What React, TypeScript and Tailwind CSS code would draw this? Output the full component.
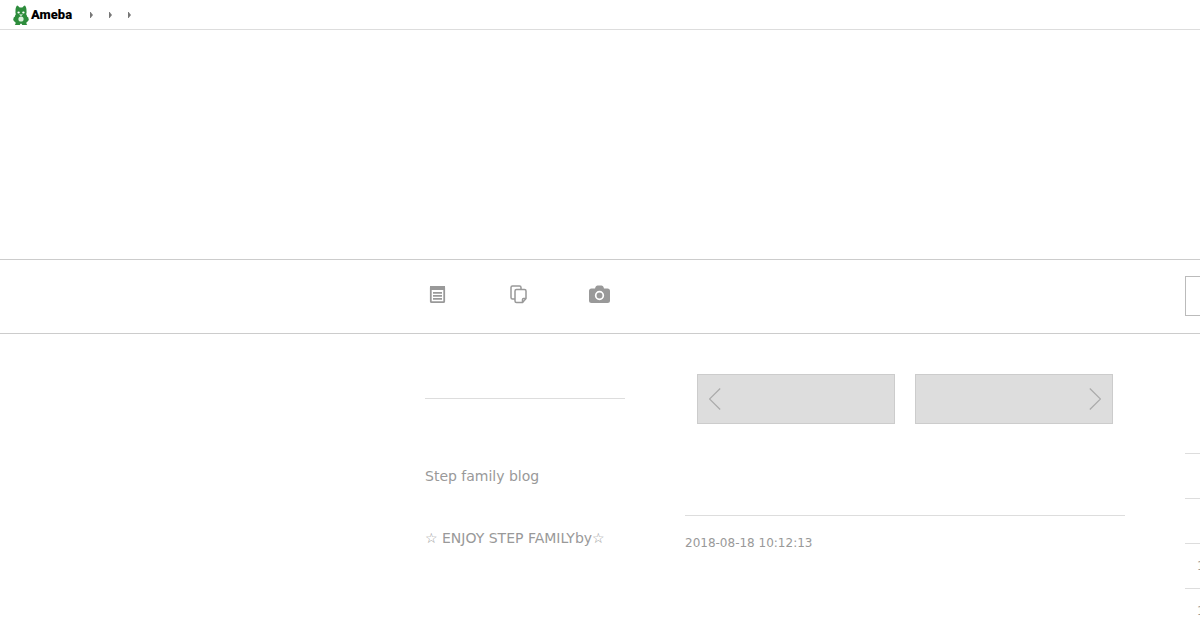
import React from 'react';

const ranking = ['', '', '1', '1', ''];

function Logo() {
  return (
    <a href="#" aria-label="Ameba" className="flex items-center gap-0.5">
      <svg width="16" height="20" viewBox="0 0 16 20" fill="#2d8c3c">
        <path d="M4 .4c1 .2 2 1.100 2.700 2.200h2.600C10 1.500 11 .600 12 .400c1.200 1.600 1.600 3.400 1.500 5.400.2 1.300.1 2.400-.3 3.400.7.900 1 1.900 1.100 2.800l.9.200.6 2.600c-.4 1.200-1.200 2-2.300 2.400.2.700.1 1.200-.2 1.500l1 1.200H9.200L8.600 18.700H7.400L6.800 19.900H1.700l1-1.200c-.3-.3-.4-.8-.2-1.500C1.400 16.800.6 16 .2 14.800l.6-2.600.9-.2c.1-.9.4-1.900 1.100-2.800-.4-1-.5-2.100-.3-3.400C2.400 3.800 2.800 2 4 .4z" />
        <ellipse cx="8" cy="14" rx="2.600" ry="2.600" fill="#d9efda" />
        <ellipse cx="5.600" cy="7.600" rx="1.200" ry="1" fill="#fff" />
        <ellipse cx="10.400" cy="7.600" rx="1.200" ry="1" fill="#fff" />
        <path d="M6 9.500h4L8 11z" fill="#fff" />
      </svg>
      <span className="font-['Roboto',sans-serif] text-[13px] leading-5 font-black text-black">Ameba</span>
    </a>
  );
}

function Crumb() {
  return (
    <svg width="3" height="6" viewBox="0 0 3 6" fill="#777">
      <path d="M0 0h.6L3 3 .6 6H0z" />
    </svg>
  );
}

function ArticleIcon() {
  return (
    <svg width="25" height="24" viewBox="0 0 25 24" fill="none" stroke="#999">
      <rect x="5.800" y="4.800" width="13.400" height="15.400" rx=".8" strokeWidth="1.800" />
      <path d="M5 6h15" strokeWidth="4" />
      <path d="M8 10.800h9M8 13.800h9M8 16.800h9" strokeWidth="1.700" />
    </svg>
  );
}

function ThemeIcon() {
  return (
    <svg width="25" height="24" viewBox="0 0 25 24" fill="none" stroke="#999" strokeWidth="1.500" strokeLinejoin="round">
      <path d="M9 17H6.500A1.500 1.500 0 0 1 5 15.500V5.500A1.500 1.500 0 0 1 6.500 4h7A1.500 1.500 0 0 1 15 5.500V7" />
      <path d="M10.500 7.500h8A1.500 1.500 0 0 1 20 9v7.500L16.500 20.500h-6A1.500 1.500 0 0 1 9 19V9a1.500 1.500 0 0 1 1.500-1.500z" />
      <path d="M20 16.500h-2.500a1 1 0 0 0-1 1v3" />
    </svg>
  );
}

function PhotoIcon() {
  return (
    <svg width="25" height="24" viewBox="0 0 25 24" fill="#999">
      <path d="M8.500 5Q9 3.500 10.500 3.500h4q1.500 0 2 1.500l.5 1.500h3.500q2.500 0 2.500 2.500v9.500q0 2.500-2.500 2.500h-16Q2 21 2 18.500V9q0-2.500 2.500-2.500H8z" />
      <circle cx="12.500" cy="13.500" r="3.800" fill="none" stroke="#fff" strokeWidth="1.700" />
    </svg>
  );
}

function Chevron({ next = false }: { next?: boolean }) {
  return (
    <svg width="12" height="22" viewBox="0 0 12 22" fill="none" stroke="#aaa" strokeWidth="1.200">
      <path d={next ? 'M.8.5L11.500 11 .8 21.500' : 'M11.200.5L.5 11l10.700 10.500'} />
    </svg>
  );
}

function App() {
  return (
    <div className="min-h-screen overflow-hidden bg-white font-['DejaVu_Sans',sans-serif] text-[#999]">
      <header className="flex h-[30px] items-center border-b border-[#ddd] pl-[13px]">
        <Logo />
        <nav aria-label="Breadcrumb" className="flex gap-4 pt-px pl-[18px]">
          <Crumb />
          <Crumb />
          <Crumb />
        </nav>
      </header>

      <div className="h-[229px]" />

      <div className="flex h-[75px] items-start border-y border-[#ccc] pt-4 pl-[425px]">
        <nav className="flex w-[760px] shrink-0 gap-14 pt-1.5">
          <a href="#" aria-label="Articles"><ArticleIcon /></a>
          <a href="#" aria-label="Themes"><ThemeIcon /></a>
          <a href="#" aria-label="Photos"><PhotoIcon /></a>
        </nav>
        <button type="button" aria-label="Follow" className="h-10 w-[300px] shrink-0 border border-[#bbb]" />
      </div>

      <main className="flex gap-[60px] pl-[425px]">
        {/* Profile */}
        <aside className="w-[200px] shrink-0 pt-16">
          <hr className="border-[#ddd]" />
          <p className="pt-[67px] text-sm leading-5">Step family blog</p>
          <p className="pt-[42px] text-sm leading-5 whitespace-nowrap">☆ ENJOY STEP FAMILYby☆</p>
        </aside>

        {/* Entry */}
        <article className="w-[440px] shrink-0 pt-10">
          <div className="flex gap-5 px-3">
            <button type="button" aria-label="Previous" className="flex h-[50px] flex-1 items-center border border-[#ccc] bg-[#ddd] px-[11px]">
              <Chevron />
            </button>
            <button type="button" aria-label="Next" className="flex h-[50px] flex-1 items-center justify-end border border-[#ccc] bg-[#ddd] px-[11px]">
              <Chevron next />
            </button>
          </div>
          <hr className="mt-[91px] border-[#ddd]" />
          <time className="block pt-[17px] text-xs leading-5">2018-08-18 10:12:13</time>
        </article>

        {/* Ranking */}
        <aside className="h-[296px] w-[300px] shrink-0 overflow-hidden pt-[119px]">
          <ul>
            {ranking.map((rank, i) => (
              <li key={i} className="h-[45px] border-t border-[#ddd] pl-3 text-xs leading-[44px]">
                {rank}
              </li>
            ))}
          </ul>
        </aside>
      </main>
    </div>
  );
}

export default App;
